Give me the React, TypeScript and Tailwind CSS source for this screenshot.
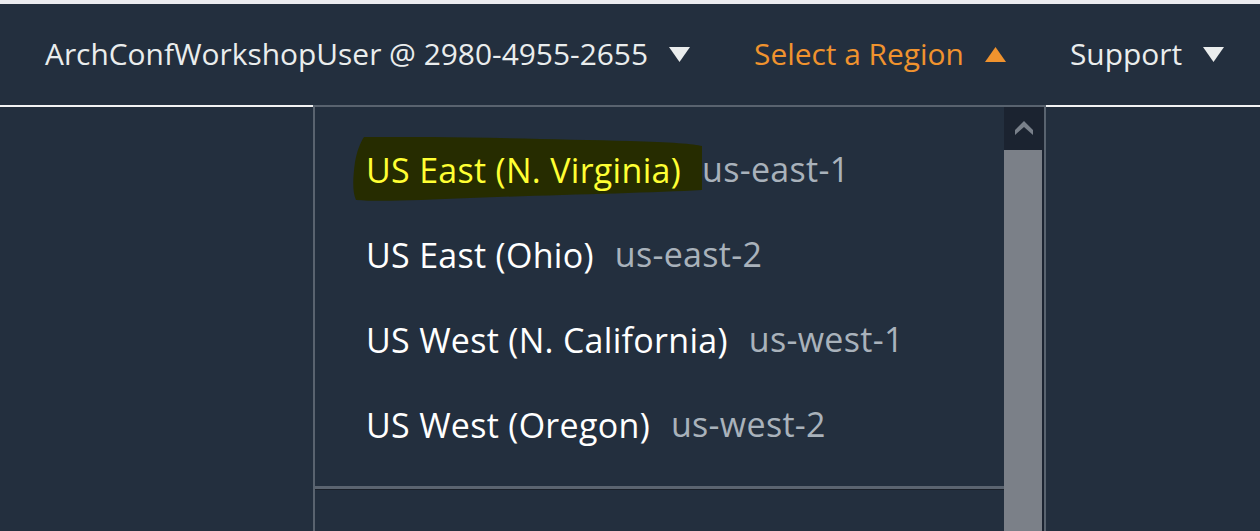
const regions = [
  { name: "US East (N. Virginia)", code: "us-east-1", marked: true },
  { name: "US East (Ohio)", code: "us-east-2" },
  { name: "US West (N. California)", code: "us-west-1" },
  { name: "US West (Oregon)", code: "us-west-2" },
];

function Caret({ up, color }: { up?: boolean; color: string }) {
  return (
    <svg width="23" height="17" viewBox="0 0 23 17" className="shrink-0">
      {up ? (
        <path d="M11.5 1 L22 16 L1 16 Z" fill={color} />
      ) : (
        <path d="M1 1 L22 1 L11.5 16 Z" fill={color} />
      )}
    </svg>
  );
}

function Marker() {
  // highlighter scribble behind the selected region
  return (
    <svg
      className="absolute left-[-16px] top-[-9px]"
      width="356"
      height="66"
      viewBox="0 0 356 66"
    >
      <path
        d="M14 0 C80 -1 200 2 280 4 C320 5 345 7 352 9 L352 53 C300 56 200 58 120 61 C70 63 30 65 6 63 C2 54 3 40 5 25 C7 14 10 6 14 0 Z"
        fill="#262c00"
      />
    </svg>
  );
}

export default function App() {
  return (
    <div
      className="h-[531px] w-full overflow-hidden bg-[#232f3e]"
      style={{ fontFamily: "'Open Sans', sans-serif" }}
    >
      <div className="h-[4px] bg-[#ebebef]" />
      <header className="flex h-[101px] items-center pl-[45px] text-[29.9px] text-[#eaeded]">
        <div className="flex items-center gap-[20px]">
          <span>ArchConfWorkshopUser @ 2980-4955-2655</span>
          <Caret color="#eaeded" />
        </div>
        <div className="ml-[63px] flex items-center gap-[20px] text-[#f0932e]">
          <span>Select a Region</span>
          <Caret up color="#f0932e" />
        </div>
        <div className="ml-[63px] flex items-center gap-[20px]">
          <span>Support</span>
          <Caret color="#eaeded" />
        </div>
      </header>
      <div className="flex h-[426px]">
        <div className="w-[313px] border-t-2 border-[#f2f3f3]" />
        <div className="flex w-[733px] border-x-2 border-t-2 border-[#59636f]">
          <div className="flex flex-1 flex-col">
            <ul className="pt-[20px] text-[34px] tracking-[0.3px]">
              {regions.map((r) => (
                <li key={r.code} className="flex h-[85px] items-center pl-[51px]">
                  <span className="relative leading-[48px]">
                    {r.marked ? <Marker /> : null}
                    <span
                      className={`relative ${r.marked ? "text-[#ffff33]" : "text-white"}`}
                    >
                      {r.name}
                    </span>
                  </span>
                  <span className="relative ml-[21px] text-[#a9b2bb]">{r.code}</span>
                </li>
              ))}
            </ul>
            <div className="mt-[19px] h-[3px] bg-[#5b6470] shadow-[0_1px_0_#1a2029]" />
          </div>
          <div className="flex w-[40px] flex-col bg-[#1b2330]">
            <div className="flex h-[43px] items-start justify-center pt-[14px]">
              <svg width="18" height="14" viewBox="0 0 18 14">
                <path d="M9 0 L18 9 L18 14 L9 6 L0 14 L0 9 Z" fill="#79808a" />
              </svg>
            </div>
            <div className="mr-[2px] flex-1 bg-[#7b8088]" />
          </div>
        </div>
        <div className="flex-1 border-t-2 border-[#f2f3f3]" />
      </div>
    </div>
  );
}
